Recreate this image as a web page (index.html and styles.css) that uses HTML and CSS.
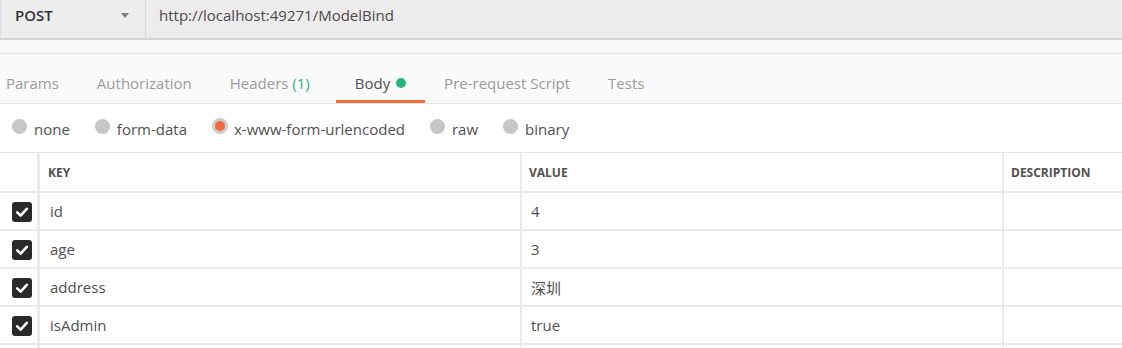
FILE: index.html
```html
<!DOCTYPE html>
<html>
<head>
<meta charset="utf-8">
<link rel="stylesheet" href="styles.css">
</head>
<body>
<div class="topbar">
  <div class="method"><span class="method-name">POST</span><span class="caret"></span></div>
  <div class="url">http://localhost:49271/ModelBind</div>
</div>
<div class="gap-strip"></div>
<div class="tabs">
  <div class="tab first">Params</div>
  <div class="tab">Authorization</div>
  <div class="tab">Headers <span class="count">(1)</span></div>
  <div class="tab active">Body <span class="dot"></span></div>
  <div class="tab">Pre-request Script</div>
  <div class="tab">Tests</div>
</div>
<div class="radios">
  <div class="radio"><span class="circle"></span>none</div>
  <div class="radio"><span class="circle"></span>form-data</div>
  <div class="radio"><span class="circle selected"></span>x-www-form-urlencoded</div>
  <div class="radio"><span class="circle"></span>raw</div>
  <div class="radio"><span class="circle"></span>binary</div>
</div>
<div class="table">
  <div class="row head">
    <div class="cell chk"></div>
    <div class="cell key">KEY</div>
    <div class="cell val">VALUE</div>
    <div class="cell desc">DESCRIPTION</div>
  </div>
  <div class="row">
    <div class="cell chk"><span class="box"><svg viewBox="0 0 20 20" width="20" height="20"><path d="M5.2 10.4 L8.6 13.6 L14.8 6.8" fill="none" stroke="#fff" stroke-width="2.6" stroke-linecap="round" stroke-linejoin="round"/></svg></span></div>
    <div class="cell key">id</div>
    <div class="cell val">4</div>
    <div class="cell desc"></div>
  </div>
  <div class="row">
    <div class="cell chk"><span class="box"><svg viewBox="0 0 20 20" width="20" height="20"><path d="M5.2 10.4 L8.6 13.6 L14.8 6.8" fill="none" stroke="#fff" stroke-width="2.6" stroke-linecap="round" stroke-linejoin="round"/></svg></span></div>
    <div class="cell key">age</div>
    <div class="cell val">3</div>
    <div class="cell desc"></div>
  </div>
  <div class="row">
    <div class="cell chk"><span class="box"><svg viewBox="0 0 20 20" width="20" height="20"><path d="M5.2 10.4 L8.6 13.6 L14.8 6.8" fill="none" stroke="#fff" stroke-width="2.6" stroke-linecap="round" stroke-linejoin="round"/></svg></span></div>
    <div class="cell key">address</div>
    <div class="cell val">深圳</div>
    <div class="cell desc"></div>
  </div>
  <div class="row">
    <div class="cell chk"><span class="box"><svg viewBox="0 0 20 20" width="20" height="20"><path d="M5.2 10.4 L8.6 13.6 L14.8 6.8" fill="none" stroke="#fff" stroke-width="2.6" stroke-linecap="round" stroke-linejoin="round"/></svg></span></div>
    <div class="cell key">isAdmin</div>
    <div class="cell val">true</div>
    <div class="cell desc"></div>
  </div>
  <div class="row">
    <div class="cell chk"></div>
    <div class="cell key"></div>
    <div class="cell val"></div>
    <div class="cell desc"></div>
  </div>
</div>
</body>
</html>
```
FILE: styles.css
```css
html, body {
  margin: 0;
  padding: 0;
  background: #ffffff;
  overflow: hidden;
}
body {
  font-family: "Open Sans", "Noto Sans CJK SC", sans-serif;
  font-size: 15px;
  color: #505050;
  width: 1122px;
  height: 348px;
}
.topbar {
  display: flex;
  height: 38px;
  background: #ececec;
  border-bottom: 2px solid #d4d4d4;
}
.method {
  width: 146px;
  box-sizing: border-box;
  border-left: 1px solid #dedede;
  border-right: 1px solid #d9d9d9;
  display: flex;
  align-items: flex-start;
  justify-content: space-between;
  padding: 5px 16px 0 14px;
  background: #ededed;
}
.method-name {
  font-weight: 600;
  color: #333333;
  line-height: 20px;
}
.caret {
  width: 0;
  height: 0;
  margin-top: 8px;
  border-left: 4.5px solid transparent;
  border-right: 4.5px solid transparent;
  border-top: 5px solid #7f7f7f;
}
.url {
  padding: 5px 0 0 13px;
  line-height: 20px;
  color: #4a4a4a;
}
.gap-strip {
  height: 13px;
  background: #fafafa;
  border-bottom: 1px solid #e6e6e6;
}
.tabs {
  display: flex;
  height: 50px;
  background: #fafafa;
  border-bottom: 1px solid #e6e6e6;
  box-sizing: border-box;
}
.tab {
  padding: 9px 19px 0;
  height: 49px;
  box-sizing: border-box;
  display: flex;
  align-items: center;
  color: #9b9b9b;
  white-space: pre;
}
.tab.first {
  padding-left: 6px;
}
.count {
  color: #26b47f;
  margin-right: 7px;
}
.tab.active {
  color: #505050;
  border-bottom: 3px solid #f26b3a;
  padding-top: 12px;
}
.dot {
  display: inline-block;
  width: 10px;
  height: 10px;
  border-radius: 50%;
  background: #26b47f;
  margin-left: 2px;
  margin-bottom: 1px;
}
.radios {
  display: flex;
  align-items: center;
  height: 48px;
  padding-left: 12px;
  padding-top: 2px;
  box-sizing: border-box;
  background: #ffffff;
}
.radio {
  display: flex;
  align-items: center;
  margin-right: 25px;
  color: #505050;
}
.circle {
  width: 15px;
  height: 15px;
  border-radius: 50%;
  background: #c6c6c6;
  margin-right: 7px;
  margin-top: -6px;
  box-sizing: border-box;
}
.circle.selected {
  width: 16px;
  height: 16px;
  border: 3px solid #cccccc;
  background: #f26b3a;
  margin-right: 6px;
}
.table {
  border-top: 1px solid #e6e6e6;
}
.row {
  display: flex;
  height: 38px;
  border-bottom: 2px solid #eaeaea;
  box-sizing: border-box;
}
.row.head {
  height: 40px;
}
.cell {
  display: flex;
  align-items: center;
  box-sizing: border-box;
}
.chk {
  width: 37px;
  justify-content: flex-start;
  padding-left: 12px;
  padding-top: 1px;
}
.key {
  width: 483px;
  border-left: 3px solid #ebebeb;
  padding-left: 10px;
}
.val {
  width: 482px;
  border-left: 2px solid #ebebeb;
  padding-left: 9px;
}
.desc {
  flex: 1;
  border-left: 2px solid #ebebeb;
  padding-left: 7px;
}
.head .cell {
  font-size: 12px;
  font-weight: 700;
  color: #505050;
}
.head .key {
  padding-left: 8px;
}
.head .val {
  padding-left: 7px;
}
.box {
  width: 20px;
  height: 20px;
  border-radius: 3px;
  background: #2a2a2a;
  display: block;
}
.box svg {
  display: block;
}
```
